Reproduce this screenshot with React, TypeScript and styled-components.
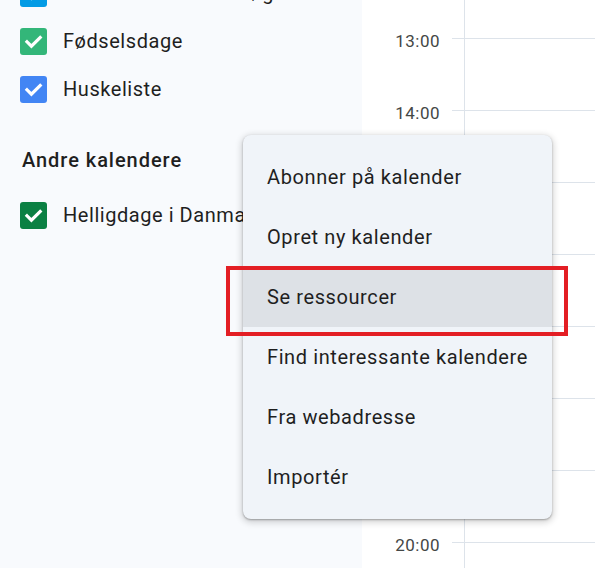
import React from "react";
import styled, { createGlobalStyle } from "styled-components";

const Global = createGlobalStyle`
  html, body { margin: 0; padding: 0; }
  body {
    width: 595px; height: 568px; overflow: hidden;
    font-family: Roboto, "Noto Sans", "Liberation Sans", sans-serif;
    background: #ffffff;
  }
`;

const Page = styled.div`
  position: relative;
  width: 595px;
  height: 568px;
  display: grid;
  grid-template-columns: 362px 1fr;
  overflow: hidden;
`;

const Sidebar = styled.aside`
  background: #f8fafd;
  overflow: hidden;
`;

const List = styled.div<{ $shift?: number }>`
  display: flex;
  flex-direction: column;
  margin-top: ${(p) => p.$shift ?? 0}px;
`;

const Row = styled.div`
  height: 48px;
  display: flex;
  align-items: center;
  gap: 16px;
  padding-left: 20px;
  white-space: nowrap;
  font-size: 20px;
  letter-spacing: 0.55px;
  color: #1f1f1f;
`;

const Box = styled.span<{ $color: string }>`
  flex: none;
  width: 27px;
  height: 27px;
  border-radius: 3px;
  background: ${(p) => p.$color};
  display: flex;
  align-items: center;
  justify-content: center;
`;

const Heading = styled.div`
  margin: 30px 0 14px;
  padding-left: 22px;
  height: 34px;
  line-height: 34px;
  font-size: 20px;
  font-weight: 500;
  letter-spacing: 0.95px;
  color: #1f1f1f;
`;

const Main = styled.main`
  overflow: hidden;
  background: #ffffff;
`;

const Hours = styled.div`
  margin-top: -34px;
  display: flex;
  flex-direction: column;
`;

const HourRow = styled.div`
  height: 72px;
  display: grid;
  grid-template-columns: 90px 1fr;
`;

const HourLabel = styled.div`
  margin-top: -8px;
  padding-right: 12px;
  text-align: right;
  line-height: 22px;
  height: 22px;
  font-size: 17px;
  letter-spacing: 0.5px;
  color: #444746;
`;

const HourCell = styled.div`
  border-top: 1px solid #dde3ea;
`;

const DayCol = styled.div`
  margin-left: 12px;
  height: 100%;
  border-left: 1px solid #dde3ea;
`;

const Menu = styled.div`
  position: absolute;
  left: 243px;
  top: 135px;
  width: 309px;
  padding: 12px 0;
  background: #f0f4f9;
  border-radius: 8px;
  box-shadow: 0 2px 6px 2px rgba(0, 0, 0, 0.15), 0 1px 2px rgba(0, 0, 0, 0.3);
  display: flex;
  flex-direction: column;
`;

const MenuItem = styled.div<{ $active?: boolean }>`
  height: 60px;
  display: flex;
  align-items: center;
  padding-left: 24px;
  font-size: 20px;
  letter-spacing: 0.6px;
  color: #1f1f1f;
  background: ${(p) => (p.$active ? "#dde1e6" : "transparent")};
  white-space: nowrap;
`;

const Highlight = styled.div`
  position: absolute;
  left: 226px;
  top: 266px;
  width: 342px;
  height: 70px;
  box-sizing: border-box;
  border: 4px solid #e31e24;
  pointer-events: none;
`;

const Check = () => (
  <svg width="27" height="27" viewBox="0 0 27 27" aria-hidden>
    <path d="M7 13.8 L11.4 18.2 L20.2 9.4" fill="none" stroke="#fff" strokeWidth="3.2" strokeLinecap="square" />
  </svg>
);

const cals1 = [
  { name: "Kristian Bertelsen Høgård", color: "#039be5" },
  { name: "Fødselsdage", color: "#33b679" },
  { name: "Huskeliste", color: "#4285f4" },
];

const hours = ["12:00", "13:00", "14:00", "15:00", "16:00", "17:00", "18:00", "19:00", "20:00"];

const menuItems = [
  "Abonner på kalender",
  "Opret ny kalender",
  "Se ressourcer",
  "Find interessante kalendere",
  "Fra webadresse",
  "Importér",
];

export default function App() {
  return (
    <>
      <Global />
      <Page>
        <Sidebar>
          <List $shift={-31}>
            {cals1.map((c) => (
              <Row key={c.name}>
                <Box $color={c.color}>
                  <Check />
                </Box>
                {c.name}
              </Row>
            ))}
          </List>
          <Heading>Andre kalendere</Heading>
          <List>
            <Row>
              <Box $color="#0b8043">
                <Check />
              </Box>
              Helligdage i Danmark
            </Row>
          </List>
        </Sidebar>
        <Main>
          <Hours>
            {hours.map((h) => (
              <HourRow key={h}>
                <HourLabel>{h}</HourLabel>
                <HourCell>
                  <DayCol />
                </HourCell>
              </HourRow>
            ))}
          </Hours>
        </Main>
        <Menu>
          {menuItems.map((m) => (
            <MenuItem key={m} $active={m === "Se ressourcer"}>
              {m}
            </MenuItem>
          ))}
        </Menu>
        <Highlight />
      </Page>
    </>
  );
}
